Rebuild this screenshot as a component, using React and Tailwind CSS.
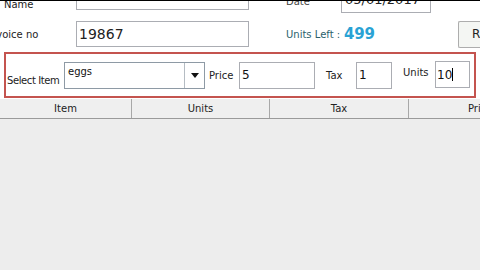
import React from 'react';

const font = { fontFamily: '"DejaVu Sans", "Liberation Sans", sans-serif' };

const Field = ({ className = '', children }) => (
  <div className={`border border-[#abadb3] bg-white flex items-center shrink-0 ${className}`}>
    {children}
  </div>
);

export default function App() {
  return (
    <div className="w-[480px] h-[270px] overflow-hidden bg-[#ededed] relative" style={font}>
      <div className="bg-white h-[99px] flex flex-col">
        {/* customer / date row (cut off at the top) */}
        <div className="flex items-center h-[26px] -mt-[16px] relative">
          <span className="w-[76px] pl-[4px] text-[10px] text-[#222]">Customer Name</span>
          <Field className="w-[173px] h-[26px]" />
          <span className="ml-[37px] mt-[8px] w-[55px] text-[10px] text-[#444]">Date</span>
          <Field className="w-[90px] h-[26px] mt-[6px] pl-[3px] text-[13px] text-[#222]">05/01/2017</Field>
          <div className="absolute left-0 top-[16px] w-full h-[1px] bg-black" />
        </div>
        {/* invoice row */}
        <div className="flex items-center h-[26px] mt-[11px]">
          <span className="-ml-[13px] w-[89px] text-[10px] text-[#222] whitespace-nowrap">Invoice no</span>
          <Field className="w-[173px] h-[26px] pl-[2px] text-[14px] text-[#222]">19867</Field>
          <span className="ml-[37px] text-[10px] text-[#2b5f6b]">Units Left :</span>
          <span className="ml-[4px] text-[15px] font-bold tracking-[-0.3px] text-[#29a2d4]">499</span>
          <div className="ml-auto w-[22px] h-[27px] border border-r-0 border-[#adadad] bg-[#f4f6f3] rounded-l-[2px] flex items-center pl-[13px] text-[12px] text-[#222]">
            R
          </div>
        </div>
        {/* selection box */}
        <div className="mx-[4px] mt-[5px] h-[46px] border-2 border-[#c4544f] flex items-center">
          <span className="ml-[1px] mt-[10px] w-[57px] shrink-0 text-[10px] tracking-[-0.4px] text-[#222] whitespace-nowrap">Select Item</span>
          <div className="shrink-0 w-[141px] h-[27px] border border-[#8e9aa5] bg-white flex">
            <span className="flex-1 pl-[3px] pt-[1px] text-[10px] text-[#111]">eggs</span>
            <div className="w-[20px] h-full border-l border-[#b5bcc3] flex items-center justify-center">
              <div className="w-0 h-0 border-l-[4px] border-r-[4px] border-t-[5px] border-l-transparent border-r-transparent border-t-[#111]" />
            </div>
          </div>
          <span className="ml-[4px] w-[30px] shrink-0 text-[10px] text-[#222]">Price</span>
          <Field className="w-[76px] h-[27px] pl-[2px] text-[12px] text-[#111]">5</Field>
          <span className="ml-[11px] w-[30px] shrink-0 text-[10px] text-[#222]">Tax</span>
          <Field className="w-[36px] h-[27px] pl-[2px] text-[12px] text-[#111]">1</Field>
          <span className="ml-[11px] w-[32px] shrink-0 -mt-[5px] text-[10px] text-[#222]">Units</span>
          <Field className="w-[35px] h-[27px] pl-[1px] text-[12px] text-[#111] -mt-[1px]">
            10<span className="inline-block w-[1px] h-[13px] bg-black" />
          </Field>
        </div>
      </div>
      {/* grid header */}
      <div className="flex h-[20px] bg-[#efefef] border-b border-[#9a9a9a] text-[10px] text-[#222]">
        <div className="w-[132px] shrink-0 border-r border-[#a8a8a8] flex items-center justify-center">Item</div>
        <div className="w-[138px] shrink-0 border-r border-[#a8a8a8] flex items-center justify-center">Units</div>
        <div className="w-[139px] shrink-0 border-r border-[#a8a8a8] flex items-center justify-center">Tax</div>
        <div className="shrink-0 flex items-center pl-[59px] whitespace-nowrap">Price</div>
      </div>
    </div>
  );
}
